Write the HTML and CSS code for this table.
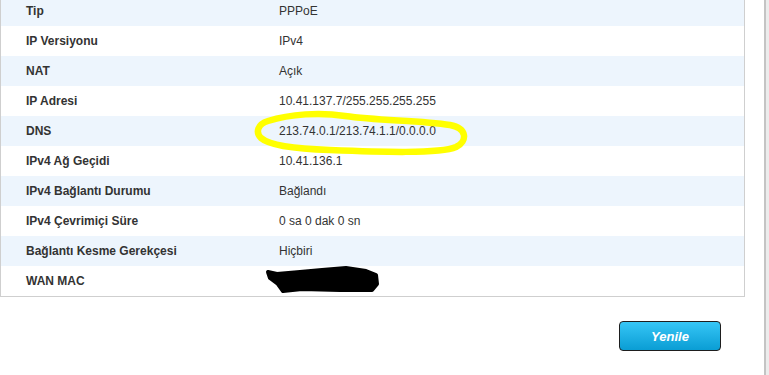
FILE: index.html
```html
<!DOCTYPE html>
<html lang="tr">
<head>
    <meta charset="UTF-8">
    <meta name="viewport" content="width=device-width, initial-scale=1.0">
    <title>WAN Bilgisi</title>
    <link rel="stylesheet" href="styles.css">
</head>
<body>
    <div class="page">
        <div class="panel">
            <table class="info">
                <colgroup>
                    <col class="col-label">
                    <col>
                </colgroup>
                <tr><th>Tip</th><td>PPPoE</td></tr>
                <tr><th>IP Versiyonu</th><td>IPv4</td></tr>
                <tr><th>NAT</th><td>Açık</td></tr>
                <tr><th>IP Adresi</th><td>10.41.137.7/255.255.255.255</td></tr>
                <tr><th>DNS</th><td>213.74.0.1/213.74.1.1/0.0.0.0</td></tr>
                <tr><th>IPv4 Ağ Geçidi</th><td>10.41.136.1</td></tr>
                <tr><th>IPv4 Bağlantı Durumu</th><td>Bağlandı</td></tr>
                <tr><th>IPv4 Çevrimiçi Süre</th><td>0 sa 0 dak 0 sn</td></tr>
                <tr><th>Bağlantı Kesme Gerekçesi</th><td>Hiçbiri</td></tr>
                <tr><th>WAN MAC</th><td>00:00:00:00:00:00</td></tr>
            </table>
        </div>

        <div class="actions">
            <button class="btn">Yenile</button>
        </div>

        <!-- hand-drawn marks over the screenshot -->
        <svg class="marks" width="764" height="375" viewBox="0 0 764 375">
            <path class="circle" d="M268 121 C 290 114, 320 112, 345 116 C 380 121, 420 120, 450 125 C 467 128, 468 141, 456 147 C 440 154, 380 152, 330 150 C 300 149, 270 146, 261 138 C 255 132, 258 124, 268 121 Z"/>
            <path class="blot" d="M268 272 L277 274 L300 272 L322 270 L346 268 L366 271 L376 275 L377 284 L372 290 L340 290 L302 289 L283 291 L278 284 L270 278 Z"/>
        </svg>
    </div>
</body>
</html>
```

FILE: styles.css
```css
body {
    margin: 0;
    background: #ececec;
    font-family: "Liberation Sans", Arial, sans-serif;
    font-size: 12px;
    color: #333;
    overflow: hidden;
}
.page {
    position: relative;
    display: flow-root;
    width: 764px;
    height: 375px;
    background: #fff;
    border-right: 2px solid #c4c4c4;
}
.panel {
    width: 745px;
    box-sizing: border-box;
    margin-top: -5px;
    border: 1px solid #cfcfcf;
}
.info {
    width: 100%;
    border-collapse: collapse;
    table-layout: fixed;
}
.col-label { width: 278px; }
.info tr { height: 30px; }
.info tr:nth-child(odd) { background: #edf5fd; }
.info th,
.info td {
    padding: 0;
    text-align: left;
    vertical-align: middle;
    white-space: nowrap;
}
.info th {
    padding-left: 25px;
    font-weight: bold;
}
.info td { font-weight: normal; }
.actions {
    width: 745px;
    display: flex;
    justify-content: flex-end;
    padding-right: 24px;
    box-sizing: border-box;
    margin-top: 24px;
}
.btn {
    width: 102px;
    height: 30px;
    border: 1px solid #1e1e1e;
    border-radius: 4px;
    background: linear-gradient(#36c6f6, #0a9dd4);
    color: #fff;
    font-family: "Liberation Sans", Arial, sans-serif;
    font-size: 13px;
    font-weight: bold;
    font-style: italic;
    cursor: pointer;
}
.marks {
    position: absolute;
    left: 0;
    top: 0;
    pointer-events: none;
}
.marks .circle {
    fill: none;
    stroke: #ffff00;
    stroke-width: 6.5;
    stroke-linejoin: round;
}
.marks .blot {
    fill: #000;
    stroke: #000;
    stroke-width: 4;
    stroke-linejoin: round;
}
```
